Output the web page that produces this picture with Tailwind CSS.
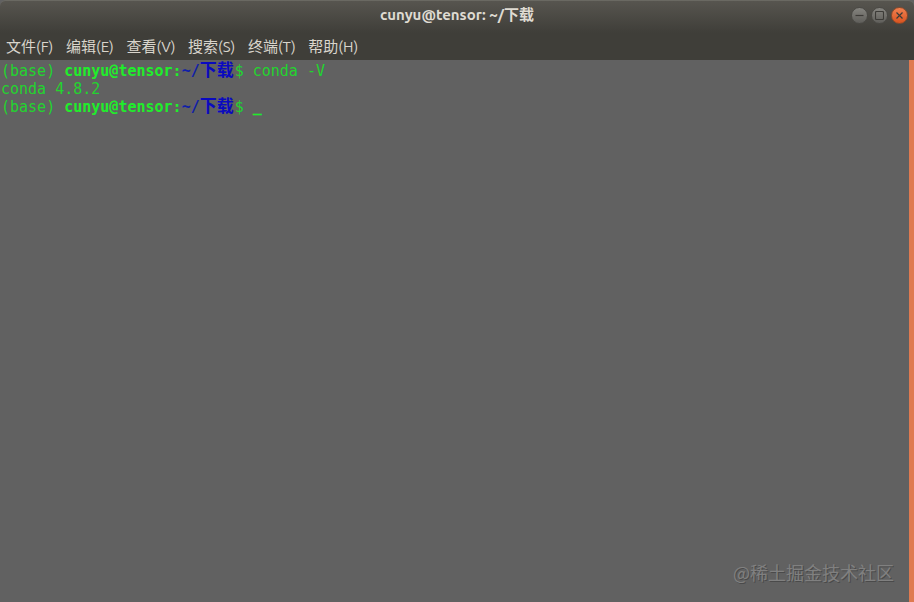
<!DOCTYPE html>
<html lang="zh-CN">
<head>
  <meta charset="UTF-8">
  <title>cunyu@tensor: ~/下载</title>
  <script src="https://cdn.jsdelivr.net/npm/@tailwindcss/browser@4"></script>
</head>
<body class="w-[914px] h-[602px] overflow-hidden bg-[#616161] flex flex-col font-['Ubuntu','Noto_Sans','Noto_Sans_CJK_SC',sans-serif]">

  <!-- title bar -->
  <div class="relative h-[33px] shrink-0 flex items-center justify-center bg-gradient-to-b from-[#57554f] to-[#3f3e39] border-t border-[#6a6962] rounded-t-[6px]">
    <p class="text-[15px] font-bold text-[#dfdbd2] pb-[3px]">cunyu@tensor: ~/下载</p>
    <div class="absolute right-[6px] top-[6px] flex gap-[3px]">
      <button class="w-[17px] h-[17px] rounded-full bg-gradient-to-b from-[#85847f] to-[#5f5e5a] border border-[#4a4945] flex items-center justify-center">
        <svg width="9" height="9" viewBox="0 0 9 9"><path d="M0.5 4.5H8.5" stroke="#3c3b37" stroke-width="1.2"/></svg>
      </button>
      <button class="w-[17px] h-[17px] rounded-full bg-gradient-to-b from-[#85847f] to-[#5f5e5a] border border-[#4a4945] flex items-center justify-center">
        <svg width="9" height="9" viewBox="0 0 9 9"><rect x="0.5" y="0.5" width="8" height="8" rx="1" fill="none" stroke="#3c3b37" stroke-width="1.1"/></svg>
      </button>
      <button class="w-[17px] h-[17px] rounded-full bg-gradient-to-b from-[#f0804f] to-[#d9531e] border border-[#8f4a2a] flex items-center justify-center">
        <svg width="9" height="9" viewBox="0 0 9 9"><path d="M1.5 1.5L7.5 7.5M7.5 1.5L1.5 7.5" stroke="#3c3b37" stroke-width="1.2"/></svg>
      </button>
    </div>
  </div>

  <!-- menu bar -->
  <div class="h-[27px] shrink-0 flex items-center bg-[#3f3e39] text-[15px] text-[#d9d5cc] pl-[6px] pt-[1px] gap-[12.6px]">
    <span>文件(F)</span>
    <span>编辑(E)</span>
    <span>查看(V)</span>
    <span>搜索(S)</span>
    <span>终端(T)</span>
    <span>帮助(H)</span>
  </div>

  <!-- terminal -->
  <div class="relative flex-1 flex">
    <div class="flex-1 pl-[1px] pt-[1px] text-[15px] leading-[18px] text-[#23d42f] font-['DejaVu_Sans_Mono','Noto_Sans_CJK_SC',monospace]">
      <div class="h-[19px] whitespace-pre">(base) <b class="text-[#1fee2b]">cunyu@tensor:</b><b class="text-[#1020a8]">~/<span class="inline-block w-[35px] text-[17px] leading-[18px] text-[#0a0ac0]">下载</span></b>$ conda -V</div>
      <div class="h-[17px] whitespace-pre">conda 4.8.2</div>
      <div class="h-[18px] whitespace-pre">(base) <b class="text-[#1fee2b]">cunyu@tensor:</b><b class="text-[#1020a8]">~/<span class="inline-block w-[35px] text-[17px] leading-[18px] text-[#0a0ac0]">下载</span></b>$ <b class="text-[#1fee2b]">_</b></div>
    </div>
    <!-- scrollbar -->
    <div class="w-[5px] bg-[#df7a50]"></div>
    <!-- watermark -->
    <p class="absolute left-[733px] top-[500px] text-[18px] leading-[24px] text-[#808080] [text-shadow:1px_1px_0_#4a4a4a] font-['Noto_Sans_CJK_SC',sans-serif]">@稀土掘金技术社区</p>
  </div>

</body>
</html>
